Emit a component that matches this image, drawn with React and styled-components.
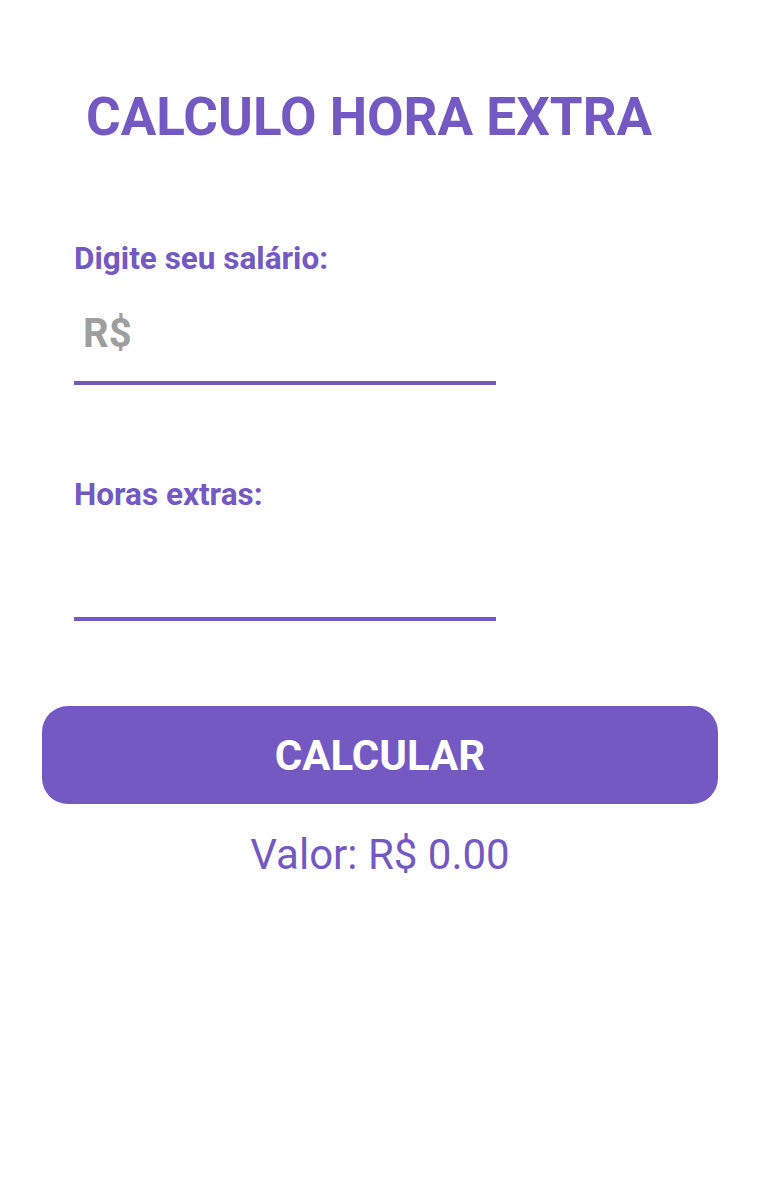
import React, { useState } from "react";
import styled, { createGlobalStyle } from "styled-components";

const purple = "#7359c1";

const GlobalStyle = createGlobalStyle`
  html, body {
    margin: 0;
    padding: 0;
    background: #ffffff;
  }
  body {
    font-family: Roboto, "Liberation Sans", Arial, sans-serif;
  }
`;

const Page = styled.div`
  width: 760px;
  min-height: 1188px;
  box-sizing: border-box;
  padding: 86px 42px 0;
  display: flex;
  flex-direction: column;
`;

const Title = styled.h1`
  margin: 0 0 0 44px;
  font-size: 53px;
  line-height: 62px;
  font-weight: 700;
  color: ${purple};
`;

const Form = styled.div`
  display: flex;
  flex-direction: column;
  gap: 92px;
  margin-top: 93px;
  padding-left: 32px;
`;

const Field = styled.label`
  display: flex;
  flex-direction: column;
`;

const Label = styled.span`
  font-size: 31.5px;
  line-height: 36px;
  font-weight: 700;
  color: ${purple};
`;

const Input = styled.input`
  display: block;
  width: 422px;
  height: 108px;
  box-sizing: border-box;
  padding: 8px 9px 0;
  margin: 0;
  border: none;
  border-bottom: 4px solid ${purple};
  outline: none;
  background: transparent;
  font-family: inherit;
  font-size: 40px;
  line-height: 48px;
  font-weight: 700;
  color: #333;

  &::placeholder {
    color: #9e9e9e;
    opacity: 1;
  }
`;

const Button = styled.button`
  margin-top: 85px;
  height: 98px;
  width: 100%;
  border: none;
  border-radius: 26px;
  background: ${purple};
  color: #ffffff;
  font-family: inherit;
  font-size: 42px;
  font-weight: 700;
  cursor: pointer;
`;

const Result = styled.p`
  margin: 26px 0 0;
  text-align: center;
  font-size: 42px;
  line-height: 50px;
  font-weight: 400;
  color: ${purple};
`;

export default function App() {
  const [salario, setSalario] = useState("");
  const [horas, setHoras] = useState("");
  const [valor, setValor] = useState(0);

  const calcular = () => {
    const s = parseFloat(salario.replace(",", ".")) || 0;
    const h = parseFloat(horas.replace(",", ".")) || 0;
    setValor((s / 220) * 1.5 * h);
  };

  return (
    <>
      <GlobalStyle />
      <Page>
        <Title>CALCULO HORA EXTRA</Title>
        <Form>
          <Field>
            <Label>Digite seu salário:</Label>
            <Input
              placeholder="R$"
              value={salario}
              onChange={(e) => setSalario(e.target.value)}
            />
          </Field>
          <Field>
            <Label>Horas extras:</Label>
            <Input value={horas} onChange={(e) => setHoras(e.target.value)} />
          </Field>
        </Form>
        <Button onClick={calcular}>CALCULAR</Button>
        <Result>Valor: R$ {valor.toFixed(2)}</Result>
      </Page>
    </>
  );
}
